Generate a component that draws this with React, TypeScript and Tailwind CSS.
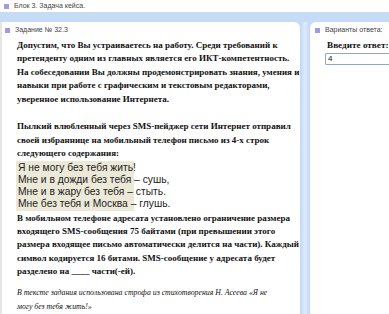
const SQUARE = 'inline-block w-[5px] h-[5px] bg-[#a29ae0] shrink-0'
const LABEL = "text-[7px] text-[#444] font-['Liberation_Sans',sans-serif] whitespace-nowrap"

const intro = [
  'Допустим, что Вы устраиваетесь на работу. Среди требований к',
  'претенденту одним из главных является его ИКТ-компетентность.',
  'На собеседовании Вы должны продемонстрировать знания, умения и',
  'навыки при работе с графическим и текстовым редакторами,',
  'уверенное использование Интернета.',
]

const story = [
  'Пылкий влюбленный через SMS-пейджер сети Интернет отправил',
  'своей избраннице на мобильный телефон письмо из 4-х строк',
  'следующего содержания:',
]

const poem = [
  'Я не могу без тебя жить!',
  'Мне и в дожди без тебя – сушь,',
  'Мне и в жару без тебя – стыть.',
  'Мне без тебя и Москва – глушь.',
]

const task = [
  'В мобильном телефоне адресата установлено ограничение размера',
  'входящего SMS-сообщения 75 байтами (при превышении этого',
  'размера входящее письмо автоматически делится на части). Каждый',
  'символ кодируется 16 битами. SMS-сообщение у адресата будет',
  'разделено на ____ части(-ей).',
]

function Lines({ lines }: { lines: string[] }) {
  return (
    <>
      {lines.map((l) => (
        <div key={l} className="whitespace-nowrap">{l}</div>
      ))}
    </>
  )
}

export default function App() {
  return (
    <div className="w-[389px] h-[314px] overflow-hidden bg-[#c6dbf5] flex flex-col">
      {/* block title */}
      <div className={`h-[12px] bg-white flex items-center gap-[5px] pl-[4px] ${LABEL}`}>
        <span className={SQUARE} />
        <span>Блок 3. Задача кейса.</span>
      </div>

      <div className="flex flex-1 mt-[10px] min-h-0">
        {/* task panel */}
        <div className="w-[300px] shrink-0 bg-white rounded-tr-[6px] border-l-2 border-[#e6e6e6] flex flex-col">
          <div className={`h-[18px] flex items-center gap-[5px] pl-[3px] ${LABEL}`}>
            <span className={SQUARE} />
            <span>Задание № 32.3</span>
          </div>
          <div className="pl-[15px] font-['Liberation_Serif',serif] text-[9px] font-bold leading-[13.6px] text-[#111]">
            <Lines lines={intro} />
            <div className="h-[13.6px]" />
            <Lines lines={story} />
            <div className="w-[118px] -ml-[1px] bg-[#ece9d8] px-[2px] py-[1px] font-['Liberation_Sans',sans-serif] font-normal text-[10.3px] leading-[12px] text-[#222]">
              <Lines lines={poem} />
            </div>
            <div className="pt-[1px] leading-[13.2px]">
              <Lines lines={task} />
            </div>
            <div className="h-[8px]" />
            <div className="italic font-normal text-[7.8px] leading-[14px]">
              <div className="whitespace-nowrap">В тексте задания использована строфа из стихотворения Н. Асеева «Я не</div>
              <div>могу без тебя жить!»</div>
            </div>
          </div>
        </div>

        {/* splitter */}
        <div className="w-[10px] shrink-0 bg-gradient-to-r from-[#c1d6f3] via-[#deebfb] to-[#c1d6f3]" />

        {/* answer panel */}
        <div className="flex-1 bg-white rounded-tl-[6px] flex flex-col">
          <div className={`h-[17px] flex items-center gap-[5px] pl-[5px] ${LABEL}`}>
            <span className={SQUARE} />
            <span>Варианты ответа:</span>
          </div>
          <div className="pl-[17px] font-['Liberation_Serif',serif] text-[9.2px] leading-[13px] font-bold text-[#111] whitespace-nowrap">
            Введите ответ:
          </div>
          <div className="ml-[15px] mt-[1px] h-[12px] border border-[#8fa6c4] rounded-l-[2px] border-r-0 flex items-center pl-[2px] font-['Liberation_Sans',sans-serif] text-[8px] text-[#111]">
            4
          </div>
        </div>
      </div>
    </div>
  )
}
